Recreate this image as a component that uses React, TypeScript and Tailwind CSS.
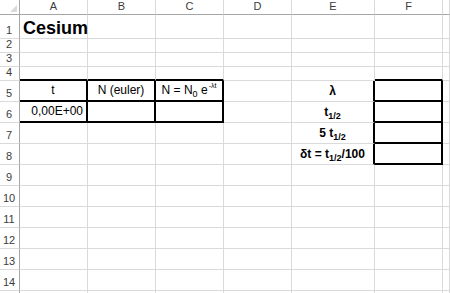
import React from "react";

const COLS = ["A", "B", "C", "D", "E", "F", ""];
const ROWS = Array.from({ length: 15 }, (_, i) => i + 1);

function rightBlack(r: number, c: number) {
  return ((r === 5 || r === 6) && c <= 2) || (r >= 5 && r <= 8 && (c === 4 || c === 5));
}
function bottomBlack(r: number, c: number) {
  return ((r >= 4 && r <= 6) && c <= 2) || (r >= 4 && r <= 8 && c === 5);
}

function Sub({ children }: { children: React.ReactNode }) {
  return <sub className="text-[9px] bottom-[-3px]">{children}</sub>;
}

function content(r: number, c: number): React.ReactNode {
  const key = `${r}-${c}`;
  switch (key) {
    case "1-0":
      return (
        <div className="flex h-full w-full items-end pl-[3px] pb-0">
          <span className="whitespace-nowrap text-[18px] font-bold leading-[20px] text-black">Cesium</span>
        </div>
      );
    case "5-0":
      return <div className="flex h-full w-full items-end justify-center pb-[3px]">t</div>;
    case "5-1":
      return <div className="flex h-full w-full items-end justify-center pb-[3px]">N (euler)</div>;
    case "5-2":
      return (
        <div className="flex h-full w-full items-end justify-center pb-[3px]">
          <span className="whitespace-nowrap">
            N = N<Sub>0</Sub> e<sup className="text-[7px] top-[-6px] ml-[1px]">-λt</sup>
          </span>
        </div>
      );
    case "6-0":
      return <div className="flex h-full w-full items-end justify-end pr-[3px] pb-[3px]">0,00E+00</div>;
    case "5-4":
      return <div className="flex h-full w-full items-end justify-center pb-[3px] font-bold">λ</div>;
    case "6-4":
      return (
        <div className="flex h-full w-full items-end justify-center pb-[3px] font-bold">
          <span>
            t<Sub>1/2</Sub>
          </span>
        </div>
      );
    case "7-4":
      return (
        <div className="flex h-full w-full items-end justify-center pb-[3px] font-bold">
          <span>
            5 t<Sub>1/2</Sub>
          </span>
        </div>
      );
    case "8-4":
      return (
        <div className="flex h-full w-full items-end justify-center pb-[3px] font-bold">
          <span className="whitespace-nowrap">
            δt = t<Sub>1/2</Sub>/100
          </span>
        </div>
      );
    default:
      return null;
  }
}

export default function App() {
  const cells: React.ReactNode[] = [];

  // header row
  cells.push(
    <div key="corner" className="flex items-start justify-end border-r border-b border-r-[#a6a6a6] border-b-[#a6a6a6] bg-white pr-[2px] pt-[5px]">
      <svg width="7" height="7" viewBox="0 0 7 7">
        <polygon points="7,0 7,7 0,7" fill="#dadada" />
      </svg>
    </div>
  );
  COLS.forEach((name, c) => {
    cells.push(
      <div
        key={`h-${c}`}
        className="flex items-end justify-center border-r border-b border-r-[#dadada] border-b-[#a6a6a6] bg-white pb-[2px] text-[11px] leading-[12px] text-[#3c3c3c]"
      >
        {name}
      </div>
    );
  });

  ROWS.forEach((r) => {
    cells.push(
      <div
        key={`r-${r}`}
        className="flex items-end justify-center border-r border-b border-r-[#a6a6a6] border-b-[#dadada] pb-[2px] pr-[1px] text-[11px] leading-[12px] text-[#3c3c3c]"
      >
        {r <= 14 ? r : null}
      </div>
    );
    COLS.forEach((_, c) => {
      const rb = rightBlack(r, c);
      const bb = bottomBlack(r, c);
      cells.push(
        <div
          key={`c-${r}-${c}`}
          className={
            "min-w-0 text-[12px] leading-[14px] text-black " +
            (rb ? "border-r-2 border-r-black " : "border-r border-r-[#dadada] ") +
            (bb ? "border-b-2 border-b-black" : "border-b border-b-[#dadada]")
          }
        >
          {content(r, c)}
        </div>
      );
    });
  });

  return (
    <div className="h-[293px] w-[450px] overflow-hidden bg-white font-['Liberation_Sans',Arial,sans-serif]">
      <div className="grid h-[310px] w-[450px] grid-cols-[20px_68px_68px_68px_68px_83px_68px_1fr] grid-rows-[15px_24px_14px_14px_14px_21px_21px_21px_21px_21px_21px_21px_21px_21px_21px_19px]">
        {cells}
      </div>
    </div>
  );
}
